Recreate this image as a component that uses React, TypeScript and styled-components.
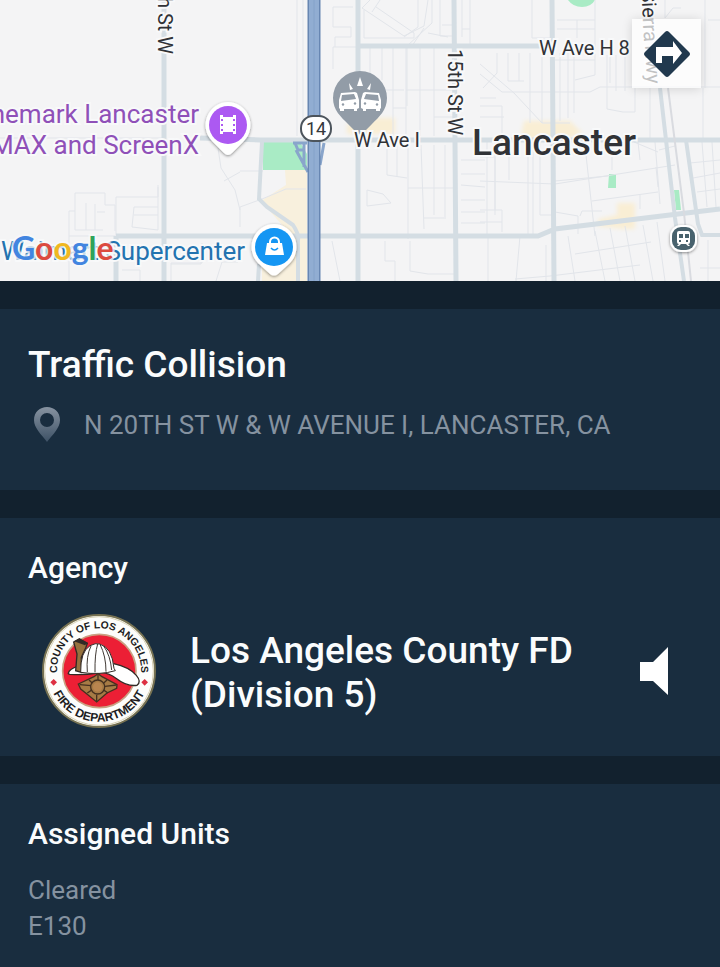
import styled, { createGlobalStyle, ThemeProvider } from 'styled-components';

const theme = {
  page: '#12212e',
  panel: '#192d3f',
  text: '#fafcfd',
  muted: '#8592a0',
  sign: '#21394e',
};

const units = ['E130'];

function App() {
  return (
    <ThemeProvider theme={theme}>
      <GlobalStyle />
      <Page>
        <MapArea>
          <IncidentMap />
          <DirectionsButton type="button" aria-label="Directions">
            <DirectionsIcon />
          </DirectionsButton>
        </MapArea>

        <Panel>
          <IncidentTitle>Traffic Collision</IncidentTitle>
          <Address>
            <AddressIcon />
            <span>N 20TH ST W &amp; W AVENUE I, LANCASTER, CA</span>
          </Address>
        </Panel>

        <Panel>
          <SectionTitle>Agency</SectionTitle>
          <AgencyRow>
            <AgencySeal />
            <AgencyName>Los Angeles County FD (Division 5)</AgencyName>
            <AudioButton type="button" aria-label="Listen">
              <svg width="28" height="48" viewBox="0 0 28 48">
                <path d="M0 15h13L28 0v48L13 34H0z" fill="#fff" />
              </svg>
            </AudioButton>
          </AgencyRow>
        </Panel>

        <Panel $grow>
          <SectionTitle>Assigned Units</SectionTitle>
          <UnitGroup>
            <dt>Cleared</dt>
            {units.map((unit) => (
              <dd key={unit}>{unit}</dd>
            ))}
          </UnitGroup>
        </Panel>
      </Page>
    </ThemeProvider>
  );
}

export default App;

function IncidentMap() {
  return (
    <MapSvg viewBox="0 0 720 281" role="img" aria-label="Map">
      <defs>
        <filter id="pinShadow" x="-30%" y="-30%" width="160%" height="170%">
          <feDropShadow dx="0" dy="1" stdDeviation="1.5" floodOpacity="0.45" />
        </filter>
        <filter id="soft" x="-20%" y="-20%" width="140%" height="140%">
          <feGaussianBlur stdDeviation="2" />
        </filter>
      </defs>
      <rect width="720" height="281" fill="#f4f4f5" />

      {/* parks and commercial areas */}
      <path d="M263 142h37l7 12v16h-44z" fill="#a9ebc5" />
      <path d="M285 170h22v111h-45v-22l36-16-37-42 25-16z" fill="#f8f0dd" />
      <path d="M568 0h27q-4 7-13 7t-14-7z" fill="#a9ebc5" />
      <path d="M609 174h7v14h-8zM674 190h5l2 20h-5z" fill="#a9ebc5" />
      <g fill="#f9eed4" filter="url(#soft)">
        <path d="M375 118h20v16h-48v-10z" />
        <path d="M524 121h46l12 12-18 7h-44z" />
        <path d="M617 203h18v26h-12l-26-3 2-7 18-4z" />
      </g>

      {/* small streets */}
      <g fill="none" stroke="#e2e5ea" strokeWidth="1">
        <path d="M0 138h164M75 193h30v12h10v26M75 193v37h28M86 203v27M95 204v26M69 211v70M69 211h6M69 236h46M116 236v-39h42v-12M158 187v43l-26-3 2-20h24M134 215h24M97 212h8M171 281v-18h31v-20M171 264h30v-14M216 281l6-19h16M218 148l3 20 14 22 5 20M224 181l16-9M122 270h18v11M240 171h23M240 207l22-8 24-10h20M240 207v20" />
        <path d="M297 0v136M303 0v136M333 7h20M333 7v20h18v10h-16v10M333 47v22M333 47h23M370 0l-8 8 42 28 20-10 4-26M380 0l-8 12M376 7l38 26v5h-50V10M418 0v27l-14 10M432 0v23l-25 23v60M412 46l12-18M440 0v36h12M442 25h10M448 37l-20-4M370 46v30M382 46v34M393 46v90M406 46v90M420 46v90M434 46v90M384 90h20M393 108h13M406 90h48M434 117h20M462 0v37M470 0v46M462 29h8" />
        <path d="M387 145v30l20 3M397 145v32M408 145v94M421 145l3 84M434 145v70M445 145v72M408 188h46M424 218h22M367 190l16 4 8 9-24 3v-16M332 241l8 40M385 241v20h10v20M410 241v30l18 3h26M461 160h24M461 174h24M461 185l24 2M461 200h24M461 212h24M461 223h24M487 142v94" />
        <path d="M532 0v38h20M557 20h38M557 29h38M595 0v75l-20 5M577 20v18M555 60h40M480 64l34 29 28 30h28M480 74l22 18h88l10-5h120M497 53v20l-14 15M508 53v28h16M519 53v28M530 53v70M542 53v70M560 53v68M568 53v65M574 53v60M607 55v54l16 3h12V88M616 55v36M625 55v36M480 98h16M480 106h22v28M480 117h24M610 55v28M650 88v52M665 0v18l8-10h8M705 0v88M703 88v50M708 20h12" />
        <path d="M480 157h15v58M480 181l75 3 120-19M495 140v70M528 140v96M533 140v96M540 140v75h14M509 140v40M480 210h22v22M480 222h22M488 236v45M520 236l-4 45M555 181l53-5M585 146l10 90M592 201l66-9M612 142v28M638 142l2 18M655 142l5 62M659 150l16-4M643 225l10 56M610 228l10 53M625 226l10 55M595 231l10 50M575 254l76-12M657 222l8 59M568 236l7 45M690 163l30-3M693 178l27-5M697 192l23-3M702 142l5 65M712 142l4 65M700 268h20M708 240v41M580 216l2-5h20M555 212l23 4v18M515 279l35-3 90-11M656 167l2 20M640 195v14M546 245v36M634 142l24 10" />
      </g>

      {/* main streets */}
      <g fill="none" stroke="#d4dde3" strokeWidth="5">
        <path d="M164 0v281M200 138l60 2h460M358 0v281M358 46h187M454 0l2 281M552 0l2 281M116 236h422l17-7 123-15 42-5M116 236v45" />
        <path d="M262 142l-3 57 8 8 26 18q6 9 5 15v41M259 264l-1 17M660 88l15 130 9 63M686 140l12 84 4 11h18" strokeWidth="4" />
        <path d="M668 88l16 125 7 68" stroke="#d9dbe0" strokeWidth="2" />
      </g>

      {/* freeway */}
      <path d="M293 143h14M295 143l3 7h6M304 143v24M296 150l12 22M324 143l-4 22" fill="none" stroke="#89a5cb" strokeWidth="3" />
      <path d="M314 0v281" stroke="#6786b2" strokeWidth="13" />
      <path d="M314 0v281" stroke="#91add2" strokeWidth="10" />
      <path d="M314 0v281" stroke="#84a2c9" strokeWidth="1" />
      <rect x="301" y="116" width="30" height="25" rx="12" fill="#fff" stroke="#4c545c" strokeWidth="2" />
      <ShieldLabel x="316" y="135" textAnchor="middle">14</ShieldLabel>

      <StreetLabel transform="translate(158 54) rotate(90)" textAnchor="end">20th St W</StreetLabel>
      <StreetLabel transform="translate(448 49) rotate(90)">15th St W</StreetLabel>
      <StreetLabel transform="translate(644 42) rotate(87)" textAnchor="end">Sierra</StreetLabel>
      <StreetLabel transform="translate(647 84) rotate(87)" textAnchor="end">Hwy</StreetLabel>
      <StreetLabel x="539" y="55">W Ave H 8</StreetLabel>
      <CityLabel x="472" y="155">Lancaster</CityLabel>

      <PlaceLabel x="199" y="123" textAnchor="end" $color="#8f50b8">Cinemark Lancaster</PlaceLabel>
      <PlaceLabel x="199" y="154" textAnchor="end" $color="#8f50b8">IMAX and ScreenX</PlaceLabel>
      <PlaceLabel x="245" y="260" textAnchor="end" $color="#2373b0">Walmart Supercenter</PlaceLabel>

      {/* cinema pin */}
      <g filter="url(#pinShadow)">
        <path d="M228 102a23 23 0 0 0-16 39l12 12q4 4 8 0l12-12a23 23 0 0 0-16-39z" fill="#fff" />
      </g>
      <circle cx="228" cy="125" r="19" fill="#ac59f2" />
      <path d="M220 115h3v2h10v-2h3v19h-3v-2h-10v2h-3z" fill="#fff" />
      <path d="M222 119v2M222 124v2M222 129v2M234 119v2M234 124v2M234 129v2" stroke="#ac59f2" strokeWidth="2" />

      {/* store pin */}
      <g filter="url(#pinShadow)">
        <path d="M274 224a23 23 0 0 0-16 39l12 11q4 3 8 0l12-11a23 23 0 0 0-16-39z" fill="#fff" />
      </g>
      <circle cx="274" cy="247" r="19" fill="#1596f3" />
      <path d="M267 243h15l2 12h-19z" fill="#fff" />
      <path d="M270 244v-2a4.500 4.500 0 0 1 9 0v2" fill="none" stroke="#fff" strokeWidth="2" />
      <path d="M271 248q3.500 4 7 0" fill="none" stroke="#1596f3" strokeWidth="1.500" />

      {/* station */}
      <g filter="url(#pinShadow)">
        <rect x="670" y="225" width="27" height="27" rx="11" fill="#fff" />
      </g>
      <rect x="672" y="227" width="23" height="23" rx="9" fill="#48626d" />
      <path d="M679 231h9q2 0 2 2v9q0 2-2 2l2 2h-2l-2-2h-5l-2 2h-2l2-2q-2 0-2-2v-9q0-2 2-2z" fill="#fff" />
      <path d="M679 234h4v4h-4zM685 234h4v4h-4zM679 240h2v2h-2zM686 240h2v2h-2z" fill="#48626d" />

      {/* collision pin */}
      <path d="M360 71a27 27 0 0 0-27 27c0 12 8 19 15 26l9 9q3 3 6 0l9-9c7-7 15-14 15-26a27 27 0 0 0-27-27z" fill="#929ca7" />
      <path d="M360 77l3 9h-6zM349 83l4 6-3 1zM371 83l-4 6 3 1z" fill="#fff" />
      <Car />
      <g transform="translate(720 0) scale(-1 1)">
        <Car />
      </g>

      <StreetLabel x="354" y="147">W Ave I</StreetLabel>

      <Wordmark x="12" y="260">
        <tspan fill="#4285e0">G</tspan>
        <tspan fill="#dc4a40">o</tspan>
        <tspan fill="#f0b820">o</tspan>
        <tspan fill="#4285e0">g</tspan>
        <tspan fill="#2fa35a">l</tspan>
        <tspan fill="#dc4a40">e</tspan>
      </Wordmark>
    </MapSvg>
  );
}

function Car() {
  return (
    <g>
      <path d="M341 93l14-1 2 1 2 7v8l-2 1v2h-3v-2h-10v2h-4v-2l-1-1v-8z" fill="#fff" />
      <path d="M342 95l12-1 2 5-15 2z" fill="#929ca7" />
      <circle cx="343" cy="104.500" r="1.200" fill="#929ca7" />
      <circle cx="355" cy="103.500" r="1.200" fill="#929ca7" />
    </g>
  );
}

function DirectionsIcon() {
  return (
    <DirectionsSvg viewBox="0 0 48 48">
      <path d="M22 2q2-2 4 0l20 20q2 2 0 4L26 46q-2 2-4 0L2 26q-2-2 0-4z" />
      <path d="M13 33V17h17v-6l9 12-9 11v-8H19v7z" fill="#fff" />
    </DirectionsSvg>
  );
}

function AddressIcon() {
  return (
    <svg width="26" height="36" viewBox="0 0 26 36" aria-hidden="true">
      <defs>
        <linearGradient id="pinFade" x1="0" y1="0" x2="0" y2="1">
          <stop offset="0" stopColor="#8793a1" />
          <stop offset="1" stopColor="#3d5165" />
        </linearGradient>
      </defs>
      <path
        d="M13 0C6 0 0 5 0 13c0 8 7 14 13 22 6-8 13-14 13-22C26 5 20 0 13 0zm0 6a7 7 0 1 1 0 14 7 7 0 0 1 0-14z"
        fill="url(#pinFade)"
        fillRule="evenodd"
      />
    </svg>
  );
}

function AgencySeal() {
  return (
    <SealSvg viewBox="37 28 342 342" role="img" aria-label="County of Los Angeles Fire Department">
      <defs>
        <path id="sealTop" d="M84 219a126 126 0 1 1 248 0" />
        <path id="sealBottom" d="M56 199a152 152 0 0 0 304 0" />
      </defs>
      <circle cx="208" cy="199" r="168" fill="#fdfdfb" stroke="#777252" strokeWidth="6" />
      <circle cx="208" cy="199" r="163" fill="none" stroke="#d9d2b4" strokeWidth="3" />
      <circle cx="209" cy="199" r="110" fill="#ec1f35" stroke="#c9a183" strokeWidth="5" />
      <SealText>
        <textPath href="#sealTop" startOffset="50%" textAnchor="middle">COUNTY OF LOS ANGELES</textPath>
      </SealText>
      <SealText $large>
        <textPath href="#sealBottom" startOffset="50%" textAnchor="middle">FIRE DEPARTMENT</textPath>
      </SealText>
      <path d="M72 223l10 10-10 10-10-10zM345 223l10 10-10 10-10-10z" fill="#dd3042" />

      {/* helmet */}
      <path d="M116 205q3-12 28-20l108-8q46 10 68 35 16 19 2 30-30 4-61-20-30-22-58-17-42 7-82 4-7-1-5-4z" fill="#fff" stroke="#322a26" strokeWidth="4" />
      <path d="M132 112l17-10 24 14-5 14-13 28v45l-17-5 4-50z" fill="#96713e" stroke="#322a26" strokeWidth="4" />
      <path d="M133 110l16-8 25 12-8 8z" fill="#322a26" />
      <path d="M153 203q-1-62 28-80 17-9 29-5 37 10 43 73l4 7q-46 14-104 5z" fill="#fff" stroke="#322a26" strokeWidth="3" />
      <path d="M184 124q-15 30-11 78M204 118q-9 30-8 85M211 119q18 35 18 82M222 124q20 28 24 72" fill="none" stroke="#403934" strokeWidth="3" />

      {/* badge */}
      <g fill="#a67b45" stroke="#45301f" strokeWidth="4">
        <path d="M146 238l47-22 12-9 12 9 45 24-1 11-29 14-31 27-33-27-15-12z" />
        <path d="M150 240l34 3M226 245l34-4M205 211v15M178 226l12 11M232 226l-13 12M173 265l16-11M235 265l-15-10M201 270v20" fill="none" />
        <circle cx="204" cy="247" r="21" />
        <circle cx="204" cy="247" r="14" fill="#b8854f" stroke="none" />
      </g>
    </SealSvg>
  );
}

const GlobalStyle = createGlobalStyle`
  * {
    box-sizing: border-box;
    margin: 0;
    padding: 0;
  }

  body {
    background-color: #12212e;
    font-family: Roboto, 'Liberation Sans', sans-serif;
  }

  button {
    border: none;
    background: none;
    cursor: pointer;
  }
`;

const Page = styled.main`
  min-height: 100vh;
  display: flex;
  flex-direction: column;
  gap: 28px;
  background-color: ${({ theme }) => theme.page};
`;

const MapArea = styled.div`
  position: relative;
  overflow: hidden;
`;

const MapSvg = styled.svg`
  display: block;
  width: 100%;
  height: auto;
`;

const StreetLabel = styled.text`
  font-size: 20px;
  fill: #303236;
  stroke: #f8f9fa;
  stroke-width: 4px;
  paint-order: stroke;
`;

const ShieldLabel = styled.text`
  font-size: 18px;
  fill: #34383c;
`;

const CityLabel = styled(StreetLabel)`
  font-size: 37px;
  font-weight: 500;
`;

const PlaceLabel = styled(StreetLabel)<{ $color: string }>`
  font-size: 26px;
  fill: ${({ $color }) => $color};
`;

const Wordmark = styled.text`
  font-family: Lato, sans-serif;
  font-size: 32px;
  font-weight: 700;
  stroke: rgba(248, 249, 250, 0.8);
  stroke-width: 4px;
  paint-order: stroke;
`;

const DirectionsButton = styled.button`
  position: absolute;
  top: 19px;
  right: 19px;
  width: 69px;
  height: 69px;
  display: flex;
  align-items: center;
  justify-content: center;
  background-color: rgba(255, 255, 255, 0.7);
  box-shadow: 0 1px 10px rgba(0, 0, 0, 0.14);
`;

const DirectionsSvg = styled.svg`
  width: 48px;
  height: 48px;
  fill: ${({ theme }) => theme.sign};
`;

const Panel = styled.section<{ $grow?: boolean }>`
  flex-grow: ${({ $grow }) => ($grow ? 1 : 0)};
  padding: 32px 28px 28px;
  background-color: ${({ theme }) => theme.panel};
`;

const IncidentTitle = styled.h1`
  font-size: 37px;
  font-weight: 500;
  line-height: 48px;
  color: ${({ theme }) => theme.text};
`;

const Address = styled.p`
  margin: 18px 0 19px;
  padding-left: 6px;
  display: flex;
  align-items: center;
  gap: 24px;
  font-size: 26px;
  line-height: 36px;
  color: ${({ theme }) => theme.muted};
`;

const SectionTitle = styled.h2`
  font-size: 30px;
  font-weight: 500;
  line-height: 36px;
  color: ${({ theme }) => theme.text};
`;

const AgencyRow = styled.div`
  margin-top: 28px;
  padding: 0 24px 0 14px;
  display: flex;
  align-items: center;
`;

const SealSvg = styled.svg`
  flex-shrink: 0;
  width: 114px;
  height: 114px;
`;

const SealText = styled.text<{ $large?: boolean }>`
  font-family: 'Liberation Sans', sans-serif;
  font-size: ${({ $large }) => ($large ? 36 : 31)}px;
  font-weight: 700;
  fill: #1d1d1f;
`;

const AgencyName = styled.h3`
  flex: 1;
  margin: 0 34px;
  padding-top: 4px;
  font-size: 37px;
  font-weight: 500;
  line-height: 44px;
  color: ${({ theme }) => theme.text};
`;

const AudioButton = styled.button`
  display: flex;
`;

const UnitGroup = styled.dl`
  margin-top: 20px;
  font-size: 26px;
  line-height: 36px;
  color: ${({ theme }) => theme.muted};
`;
